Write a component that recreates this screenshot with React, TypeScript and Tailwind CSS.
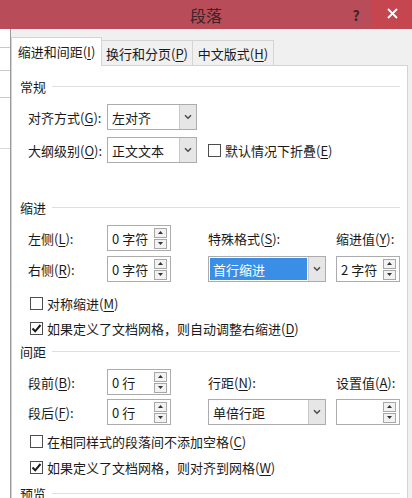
import React from "react";

const FONT = "'Noto Sans CJK SC', 'Microsoft YaHei', sans-serif";

function U({ c }: { c: string }) {
  return <span className="underline underline-offset-2">{c}</span>;
}

function Chevron() {
  return (
    <svg width="8" height="6" viewBox="0 0 8 6">
      <path d="M1 1.2 L4 4.2 L7 1.2" fill="none" stroke="#4a4a4a" strokeWidth="1.5" />
    </svg>
  );
}

function Select({ text, w, active }: { text: string; w: string; active?: boolean }) {
  return (
    <div className={`${w} h-[26px] border border-[#acacac] bg-white flex items-stretch`}>
      <div className="flex-1 flex items-center p-[1px]">
        <div
          className={`h-full w-full flex items-center pl-[3px] ${
            active ? "bg-[#3a8ee6] text-white" : "text-[#1a1a1a]"
          }`}
        >
          {text}
        </div>
      </div>
      <div className="w-[17px] bg-[#e6e6e6] border-l border-[#c8c8c8] flex items-center justify-center">
        <Chevron />
      </div>
    </div>
  );
}

function Tri({ up }: { up?: boolean }) {
  return (
    <svg width="5" height="3" viewBox="0 0 5 3">
      <path d={up ? "M0 3 L2.5 0 L5 3 Z" : "M0 0 L2.5 3 L5 0 Z"} fill="#333" />
    </svg>
  );
}

function Spinner({ text }: { text: string }) {
  return (
    <div className="w-[64px] h-[26px] border border-[#acacac] bg-white flex items-center">
      <div className="flex-1 pl-[4px] text-[#1a1a1a]">{text}</div>
      <div className="flex flex-col gap-[1px] mr-[3px]">
        <div className="w-[13px] h-[10px] border border-[#a8a8a8] bg-[#f2f2f2] flex items-center justify-center">
          <Tri up />
        </div>
        <div className="w-[13px] h-[10px] border border-[#a8a8a8] bg-[#f2f2f2] flex items-center justify-center">
          <Tri />
        </div>
      </div>
    </div>
  );
}

function Check({ checked, children, mt }: { checked?: boolean; children: React.ReactNode; mt: string }) {
  return (
    <div className={`${mt} h-[20px] flex items-center pl-[18px]`}>
      <div className="w-[13px] h-[13px] border border-[#4d4d4d] bg-white flex items-center justify-center">
        {checked && (
          <svg width="11" height="11" viewBox="0 0 11 11">
            <path d="M1.5 5.5 L4.2 8.3 L9.5 2" fill="none" stroke="#1a1a1a" strokeWidth="2" />
          </svg>
        )}
      </div>
      <div className="ml-[4px] text-[#1a1a1a]">{children}</div>
    </div>
  );
}

function Header({ text, mt }: { text: string; mt: string }) {
  return (
    <div className={`${mt} h-[20px] flex items-center pl-[8px] pr-[7px]`}>
      <span className="text-[#1a1a1a]">{text}</span>
      <div className="flex-1 ml-[6px] h-[1px] bg-[#dcdfe3]" />
    </div>
  );
}

export default function App() {
  return (
    <div
      className="w-[412px] h-[498px] overflow-hidden bg-white flex flex-col text-[13px] leading-none"
      style={{ fontFamily: FONT }}
    >
      {/* Title bar */}
      <div className="h-[29px] shrink-0 bg-[#b84d59] flex items-center">
        <div className="flex-1 text-center text-[16px] text-[#3b2426] pl-[72px]">段落</div>
        <div className="w-[32px] text-[14px] font-bold text-[#3b2426] text-center">?</div>
        <div className="w-[40px] h-[27px] self-start bg-[#c6464f] flex items-center justify-center">
          <svg width="11" height="11" viewBox="0 0 11 11">
            <path d="M1 1 L10 10 M10 1 L1 10" stroke="#ffffff" strokeWidth="1.8" />
          </svg>
        </div>
      </div>

      <div className="flex-1 flex">
        {/* Document behind */}
        <div className="w-[10px] shrink-0 bg-white flex flex-col">
          <div className="mt-[18px] h-[1px] bg-[#c8c8c8]" />
          <div className="mt-[22px] h-[1px] bg-[#c8c8c8]" />
          <div className="mt-[26px] h-[1px] bg-[#c8c8c8]" />
          <div className="mt-[50px] h-[1px] bg-[#d8d8d8]" />
        </div>

        {/* Dialog body */}
        <div className="flex-1 bg-[#f0f0f0] border-l border-[#9a9a9a] flex flex-col pr-[4px]">
          {/* Tabs */}
          <div className="h-[36px] flex items-end">
            <div className="w-[91px] h-[29px] bg-white border border-b-0 border-[#d4d4d4] flex items-center justify-center text-[#1a1a1a] relative z-10 -mb-[1px] pb-[1px]">
              缩进和间距(<U c="I" />)
            </div>
            <div className="w-[91px] h-[25px] bg-[#f0f0f0] border border-l-0 border-b-0 border-[#d4d4d4] flex items-center justify-center text-[#1a1a1a]">
              换行和分页(<U c="P" />)
            </div>
            <div className="w-[81px] h-[25px] bg-[#f0f0f0] border border-l-0 border-b-0 border-[#d4d4d4] flex items-center justify-center text-[#1a1a1a]">
              中文版式(<U c="H" />)
            </div>
          </div>

          {/* Panel */}
          <div className="flex-1 bg-white border border-[#d4d4d4] border-b-0 flex flex-col">
            <Header text="常规" mt="mt-[10px]" />
            <div className="mt-[8px] h-[26px] flex items-center pl-[16px]">
              <div className="w-[79px] text-[#1a1a1a]">
                对齐方式(<U c="G" />):
              </div>
              <Select text="左对齐" w="w-[90px]" />
            </div>
            <div className="mt-[7px] h-[26px] flex items-center pl-[16px]">
              <div className="w-[79px] text-[#1a1a1a]">
                大纲级别(<U c="O" />):
              </div>
              <Select text="正文文本" w="w-[90px]" />
              <div className="ml-[11px] w-[13px] h-[13px] border border-[#4d4d4d] bg-white" />
              <div className="ml-[4px] text-[#1a1a1a]">
                默认情况下折叠(<U c="E" />)
              </div>
            </div>

            <Header text="缩进" mt="mt-[34px]" />
            <div className="mt-[8px] h-[26px] flex items-center pl-[16px]">
              <div className="w-[79px] text-[#1a1a1a]">
                左侧(<U c="L" />):
              </div>
              <Spinner text="0 字符" />
              <div className="w-[37px]" />
              <div className="w-[128px] text-[#1a1a1a]">
                特殊格式(<U c="S" />):
              </div>
              <div className="text-[#1a1a1a]">
                缩进值(<U c="Y" />):
              </div>
            </div>
            <div className="mt-[5px] h-[26px] flex items-center pl-[16px]">
              <div className="w-[79px] text-[#1a1a1a]">
                右侧(<U c="R" />):
              </div>
              <Spinner text="0 字符" />
              <div className="w-[37px]" />
              <Select text="首行缩进" w="w-[118px]" active />
              <div className="w-[10px]" />
              <Spinner text="2 字符" />
            </div>
            <Check mt="mt-[11px]">
              对称缩进(<U c="M" />)
            </Check>
            <Check mt="mt-[5px]" checked>
              如果定义了文档网格，则自动调整右缩进(<U c="D" />)
            </Check>

            <Header text="间距" mt="mt-[3px]" />
            <div className="mt-[8px] h-[26px] flex items-center pl-[16px]">
              <div className="w-[79px] text-[#1a1a1a]">
                段前(<U c="B" />):
              </div>
              <Spinner text="0 行" />
              <div className="w-[37px]" />
              <div className="w-[128px] text-[#1a1a1a]">
                行距(<U c="N" />):
              </div>
              <div className="text-[#1a1a1a]">
                设置值(<U c="A" />):
              </div>
            </div>
            <div className="mt-[4px] h-[26px] flex items-center pl-[16px]">
              <div className="w-[79px] text-[#1a1a1a]">
                段后(<U c="F" />):
              </div>
              <Spinner text="0 行" />
              <div className="w-[37px]" />
              <Select text="单倍行距" w="w-[118px]" />
              <div className="w-[10px]" />
              <Spinner text="" />
            </div>
            <Check mt="mt-[6px]">
              在相同样式的段落间不添加空格(<U c="C" />)
            </Check>
            <Check mt="mt-[6px]" checked>
              如果定义了文档网格，则对齐到网格(<U c="W" />)
            </Check>
            <Header text="预览" mt="mt-[6px]" />
          </div>
        </div>
      </div>
    </div>
  );
}
